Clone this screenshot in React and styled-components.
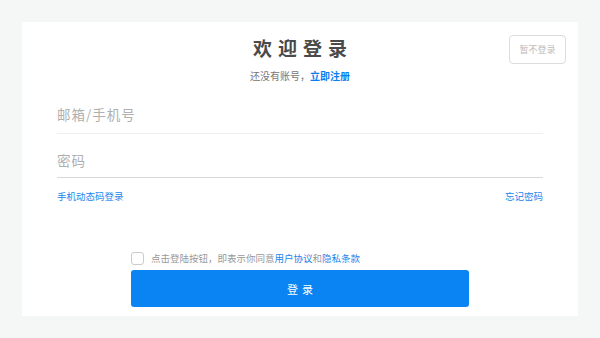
import React from 'react';
import styled, { createGlobalStyle } from 'styled-components';

const GlobalStyle = createGlobalStyle`
  html, body {
    margin: 0;
    padding: 0;
    background: #f5f7f7;
  }
  body {
    font-family: 'Noto Sans CJK SC', 'Noto Sans', sans-serif;
  }
`;

const Page = styled.div`
  width: 600px;
  height: 338px;
  padding: 22px 22px 0;
  box-sizing: border-box;
`;

const Card = styled.div`
  position: relative;
  background: #fff;
  height: 294px;
  padding: 12px 35px 0;
  box-sizing: border-box;
  display: flex;
  flex-direction: column;
`;

const Header = styled.div`
  display: flex;
  flex-direction: column;
  align-items: center;
`;

const Title = styled.h1`
  margin: 0;
  font-size: 19px;
  font-weight: 700;
  letter-spacing: 6px;
  margin-right: -6px;
  color: #4a4a4a;
  line-height: 28px;
`;

const Subtitle = styled.div`
  margin-top: 7px;
  font-size: 10px;
  color: #777;
  line-height: 14px;
`;

const Link = styled.a`
  color: ${(p) => (p.$strong ? '#0a7ef0' : '#1a86ec')};
  font-weight: ${(p) => (p.$strong ? 700 : 400)};
  text-decoration: none;
  cursor: pointer;
`;

const SkipButton = styled.button`
  position: absolute;
  top: 13px;
  right: 12px;
  width: 57px;
  height: 29px;
  border: 1px solid #dcdcdc;
  border-radius: 4px;
  background: #fff;
  color: #bbb;
  font-family: inherit;
  font-size: 9px;
  padding: 0;
`;

const Field = styled.div`
  border-bottom: 1px solid ${(p) => (p.$focused ? '#d8d8d8' : '#eeeeee')};
  height: ${(p) => p.$height}px;
  display: flex;
  align-items: flex-end;
  padding-bottom: ${(p) => p.$bottom}px;
  box-sizing: border-box;
  flex-shrink: 0;
`;

const Input = styled.input`
  border: none;
  outline: none;
  width: 100%;
  height: 20px;
  font-family: inherit;
  font-size: 13.5px;
  letter-spacing: 1px;
  color: #333;
  padding: 0;
  &::placeholder {
    color: #b0b0b0;
  }
`;

const LinkRow = styled.div`
  display: flex;
  justify-content: space-between;
  margin-top: 11px;
  font-size: 9.5px;
  line-height: 14px;
`;

const Bottom = styled.div`
  margin-top: 48px;
  padding: 0 74px;
`;

const Agree = styled.label`
  display: flex;
  align-items: center;
  gap: 7px;
  font-size: 9.5px;
  color: #999;
  line-height: 14px;
`;

const Check = styled.span`
  width: 11px;
  height: 11px;
  border: 1px solid #ccc;
  border-radius: 3px;
  background: #fff;
`;

const SubmitButton = styled.button`
  display: block;
  margin-top: 5px;
  width: 100%;
  height: 37px;
  background: #0984f2;
  border: none;
  border-radius: 3px;
  color: #fff;
  font-family: inherit;
  font-size: 11px;
  letter-spacing: 4px;
  padding: 0 0 0 4px;
`;

export default function App() {
  return (
    <>
      <GlobalStyle />
      <Page>
        <Card>
          <SkipButton>暂不登录</SkipButton>
          <Header>
            <Title>欢迎登录</Title>
            <Subtitle>
              还没有账号，<Link $strong>立即注册</Link>
            </Subtitle>
          </Header>
          <Field $height={51} $bottom={9}>
            <Input placeholder="邮箱/手机号" />
          </Field>
          <Field $height={44} $bottom={7} $focused>
            <Input type="password" placeholder="密码" />
          </Field>
          <LinkRow>
            <Link>手机动态码登录</Link>
            <Link>忘记密码</Link>
          </LinkRow>
          <Bottom>
            <Agree>
              <Check />
              <span>
                点击登陆按钮，即表示你同意<Link>用户协议</Link>和<Link>隐私条款</Link>
              </span>
            </Agree>
            <SubmitButton>登录</SubmitButton>
          </Bottom>
        </Card>
      </Page>
    </>
  );
}
